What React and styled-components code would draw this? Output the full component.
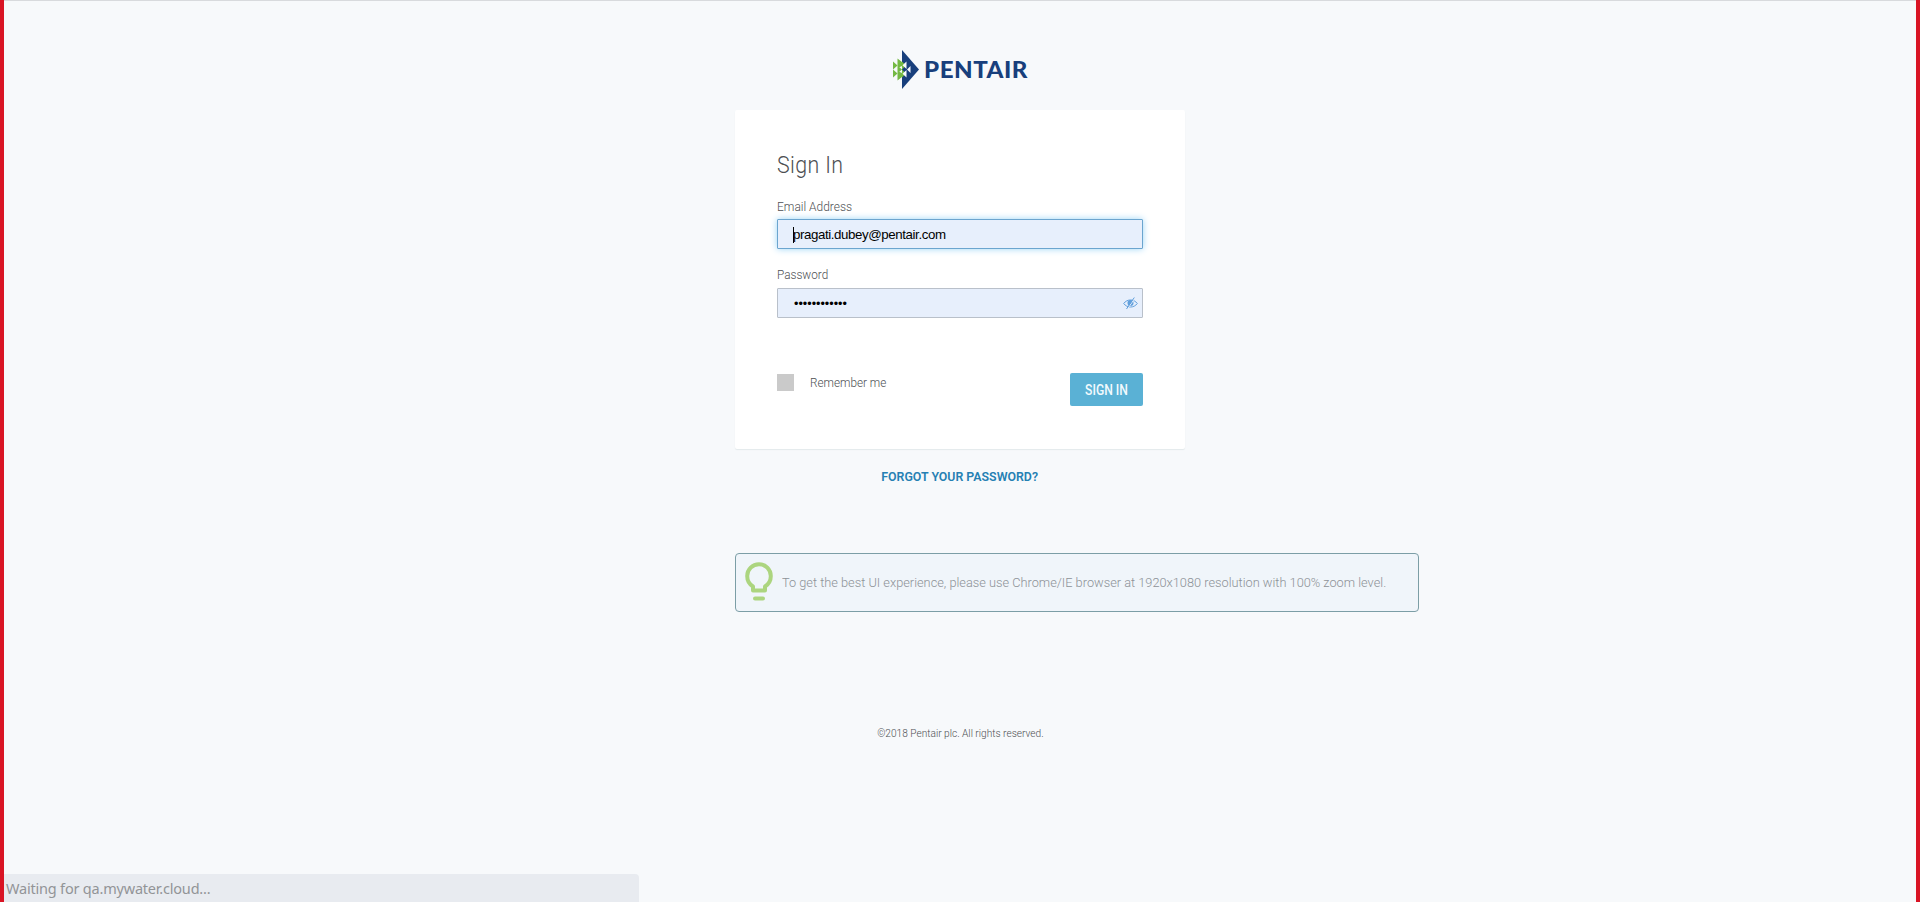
import React from "react";
import styled, { createGlobalStyle } from "styled-components";

const GlobalStyle = createGlobalStyle`
  * { box-sizing: border-box; }
  body { margin: 0; background: #f7f9fb; }
  svg { flex-shrink: 0; }
`;

const Page = styled.div`
  height: 902px;
  display: flex;
  flex-direction: column;
  overflow: hidden;
  border: solid #d91424;
  border-width: 0 4px;
  background: #f7f9fb;
  box-shadow: inset 0 1px #d8dadd;
  font-family: Roboto, "Liberation Sans", sans-serif;
`;

const Column = styled.main`
  width: 450px;
  margin: 0 auto;
  flex: 1;
  display: flex;
  flex-direction: column;
`;

const Brand = styled.header`
  height: 110px;
  padding: 50px 0 0 158px;
  display: flex;
  align-items: flex-start;
  gap: 5px;
`;

/* Condensed label: type is narrowed horizontally from its anchor edge. */
const Label = styled.span`
  display: block;
  white-space: nowrap;
  width: max-content;
  margin: 0;
  font-size: ${(p) => p.$size}px;
  line-height: ${(p) => p.$line || 20}px;
  font-weight: ${(p) => p.$weight || 300};
  color: ${(p) => p.$color || "#4d4f53"};
  letter-spacing: ${(p) => p.$spacing || 0}px;
  transform: scaleX(${(p) => p.$fit || 1});
  transform-origin: ${(p) => p.$origin || "left"};
`;

const Wordmark = styled(Label)`
  font-family: Lato, sans-serif;
  margin-top: 10px;
`;

const Card = styled.section`
  height: 339px;
  padding: 42px 42px 0;
  background: #fff;
  border-radius: 2px;
  box-shadow: 0 1px 1px #e3e9eb;
`;

const Field = styled.div`
  height: 30px;
  padding: 0 4px 0 15px;
  display: flex;
  align-items: center;
  justify-content: space-between;
  border: 1px solid ${(p) => (p.$focused ? "#6ba5cf" : "#b9c0ca")};
  border-radius: 1px;
  background: #e7effc;
  box-shadow: ${(p) => (p.$focused ? "0 0 7px #9bd5f7" : "none")};
`;

const FieldGroup = styled.div`
  display: flex;
  flex-direction: column;
  gap: ${(p) => p.$gap}px;
  margin-top: ${(p) => p.$top}px;
`;

const Value = styled.span`
  display: flex;
  align-items: center;
  padding: 2px 0 0 ${(p) => (p.$masked ? 1 : 0)}px;
  font-family: "Liberation Sans", sans-serif;
  font-size: ${(p) => p.$size}px;
  line-height: 20px;
  letter-spacing: ${(p) => p.$spacing || 0}px;
  color: #000;
`;

const Caret = styled.i`
  width: 1px;
  height: 16px;
  margin-right: -1px;
  background: #000;
`;

const Actions = styled.div`
  margin-top: 55px;
  display: flex;
  align-items: flex-start;
  justify-content: space-between;
`;

const Remember = styled.label`
  display: flex;
  gap: 16px;
`;

const Checkbox = styled.span`
  width: 17px;
  height: 17px;
  margin-top: 1px;
  background: #cacaca;
`;

const Button = styled.button`
  width: 73px;
  height: 33px;
  padding: 2px 0 0;
  display: flex;
  align-items: center;
  justify-content: center;
  border: 0;
  border-radius: 2px;
  background: #5ab1d5;
  font-family: inherit;
`;

const Centered = styled.div`
  display: flex;
  justify-content: center;
  margin-top: ${(p) => p.$top}px;
`;

const Notice = styled.aside`
  width: 684px;
  height: 59px;
  margin-top: 67px;
  padding: 0 0 2px 9px;
  display: flex;
  align-items: center;
  gap: 9px;
  border: 1px solid #7c9ea6;
  border-radius: 4px;
  background: #f0f5fa;
`;

const Status = styled.footer`
  width: 635px;
  height: 28px;
  padding: 2px 0 0 2px;
  border-top-right-radius: 4px;
  background: #e8ebf0;
  color: #929497;
  font: 14.5px/24px "Noto Sans", sans-serif;
  letter-spacing: -0.2px;
`;

const Logo = () => (
  <svg width="26" height="39" viewBox="0 0 26 39">
    <path d="M9 0L26 19.5L9 39Z" fill="#183f7c" />
    <path d="M0 11.5L4.5 15.5L0 19.5ZM0 19.5L4.5 23.5L0 27.5Z" fill="#74b943" />
    <path d="M4.5 8.5L9 12V16L4.5 18ZM4.5 15.5L9 19.5L4.5 23.5ZM4.5 21L9 23V27L4.5 30.5Z" fill="#74b943" />
    <path d="M9 11.5L13 15.5L9 19.5ZM9 19.5L13 23.5L9 27.5Z" fill="#74b943" />
    <path d="M13.5 11.5V19L9.5 15.3ZM13.5 20V27.5L9.5 23.7ZM17.5 16V23L14 19.5Z" fill="#f7f9fb" />
  </svg>
);

const HiddenEye = () => (
  <svg width="15" height="12" viewBox="0 0 15 12" fill="none" stroke="#619fdc">
    <path d="M.7 6.5C4 1.8 11 1.8 14.3 6.5C11 11.2 4 11.2.7 6.5Z" />
    <circle cx="7.5" cy="6.1" r="3" fill="#619fdc" stroke="none" />
    <path d="M12.3 0.5L4.5 12" stroke="#e7effc" />
    <path d="M11.3 .5L3.5 12" />
  </svg>
);

const Bulb = () => (
  <svg width="28" height="39" viewBox="0 0 28 39" fill="none" stroke="#acd57f" strokeWidth="4">
    <path d="M8 28.5V24.5C4 22 2.2 18.5 2.2 14A11.8 11.8 0 0 1 25.8 14C25.8 18.5 24 22 20 24.5V28.5Z" strokeLinejoin="round" />
    <path d="M10 36.5H18" strokeLinecap="round" />
  </svg>
);

export default function App() {
  return (
    <>
      <GlobalStyle />
      <Page>
        <Column>
          <Brand>
            <Logo />
            <Wordmark $size={22.5} $weight={900} $color="#183f7c" $spacing={0.5} $fit={1.07}>PENTAIR</Wordmark>
          </Brand>
          <Card>
            <Label as="h1" $size={23} $line={28} $fit={0.93} $spacing={0.4}>Sign In</Label>
            <FieldGroup $top={16} $gap={3}>
              <Label $size={13.5} $fit={0.885}>Email Address</Label>
              <Field $focused>
                <Value $size={13.3} $spacing={-0.41}><Caret />pragati.dubey@pentair.com</Value>
              </Field>
            </FieldGroup>
            <FieldGroup $top={15} $gap={4}>
              <Label $size={13.5} $fit={0.87}>Password</Label>
              <Field>
                <Value $masked $size={12.6}>••••••••••••</Value>
                <HiddenEye />
              </Field>
            </FieldGroup>
            <Actions>
              <Remember>
                <Checkbox />
                <Label $size={13.5} $line={18} $fit={0.87}>Remember me</Label>
              </Remember>
              <Button>
                <Label $size={14.5} $weight={500} $color="#f2fafd" $fit={0.84} $origin="center">SIGN IN</Label>
              </Button>
            </Actions>
          </Card>
          <Centered $top={17}>
            <Label $size={13.5} $weight={600} $color="#2580b3" $fit={0.915} $origin="center">FORGOT YOUR PASSWORD?</Label>
          </Centered>
          <Notice>
            <Bulb />
            <Label $size={13.5} $line={18} $color="#8d9297" $fit={0.946}>
              To get the best UI experience, please use Chrome/IE browser at 1920x1080 resolution with 100% zoom level.
            </Label>
          </Notice>
          <Centered $top={112}>
            <Label $size={11} $fit={0.92} $origin="center">©2018 Pentair plc. All rights reserved.</Label>
          </Centered>
        </Column>
        <Status>Waiting for qa.mywater.cloud...</Status>
      </Page>
    </>
  );
}
